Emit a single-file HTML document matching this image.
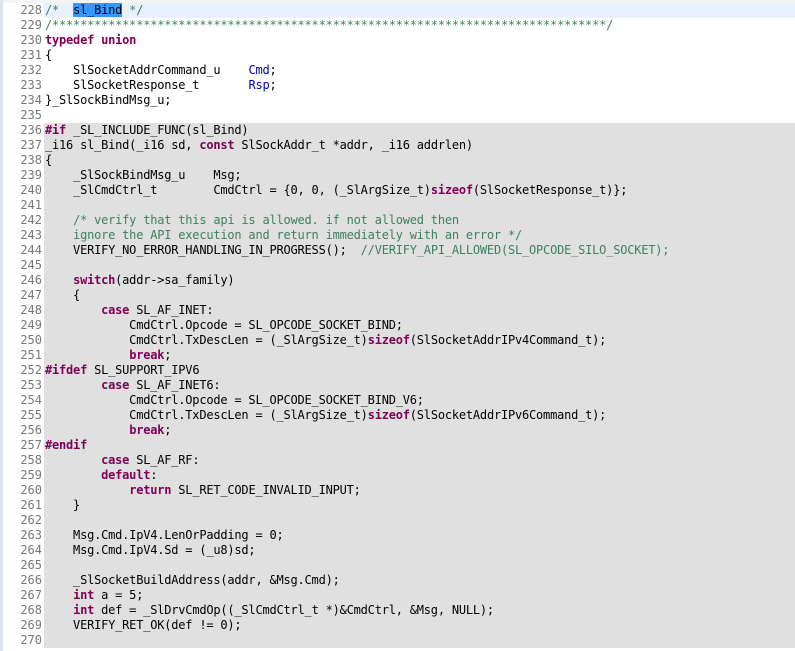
<!DOCTYPE html>
<html><head><meta charset="utf-8"><style>
body{margin:0;width:795px;height:651px;overflow:hidden;background:#fff;font-family:"DejaVu Sans Mono","Liberation Mono",monospace;font-size:12px;letter-spacing:-0.21px;position:relative}
#lb{position:absolute;left:0;top:0;width:3px;height:651px;background:#dfe3ea}
#top{position:absolute;left:0;top:0;width:795px;height:3px;background:#f4f4f4}
#gray{position:absolute;left:44px;top:123px;width:751px;height:525px;background:#e0e0e0}
#cur{position:absolute;left:44px;top:3px;width:751px;height:15px;background:#e8f2fe}
.l{position:absolute;left:0;height:15px;line-height:15px;white-space:pre;width:795px}
.n{display:inline-block;width:42px;text-align:right;color:#787878;margin-right:3px;letter-spacing:0}
.k{color:#7f0055;font-weight:bold}
.c{color:#3f7f5f}
.f{color:#0000c0}
.s{background:#3399ff}
</style></head><body>
<div id="top"></div><div id="lb"></div><div id="cur"></div><div id="gray"></div>
<div class="l" style="top:3px"><span class="n">228</span><span class="c">/*  <span class="s" style="color:#000">sl_Bind</span> */</span></div>
<div class="l" style="top:18px"><span class="n">229</span><span class="c">/*******************************************************************************/</span></div>
<div class="l" style="top:33px"><span class="n">230</span><span class="k">typedef</span> <span class="k">union</span></div>
<div class="l" style="top:48px"><span class="n">231</span>{</div>
<div class="l" style="top:63px"><span class="n">232</span>    SlSocketAddrCommand_u    <span class="f">Cmd</span>;</div>
<div class="l" style="top:78px"><span class="n">233</span>    SlSocketResponse_t       <span class="f">Rsp</span>;</div>
<div class="l" style="top:93px"><span class="n">234</span>}_SlSockBindMsg_u;</div>
<div class="l" style="top:108px"><span class="n">235</span></div>
<div class="l" style="top:123px"><span class="n">236</span><span class="k">#if</span> _SL_INCLUDE_FUNC(sl_Bind)</div>
<div class="l" style="top:138px"><span class="n">237</span>_i16 sl_Bind(_i16 sd, <span class="k">const</span> SlSockAddr_t *addr, _i16 addrlen)</div>
<div class="l" style="top:153px"><span class="n">238</span>{</div>
<div class="l" style="top:168px"><span class="n">239</span>    _SlSockBindMsg_u    Msg;</div>
<div class="l" style="top:183px"><span class="n">240</span>    _SlCmdCtrl_t        CmdCtrl = {0, 0, (_SlArgSize_t)<span class="k">sizeof</span>(SlSocketResponse_t)};</div>
<div class="l" style="top:198px"><span class="n">241</span></div>
<div class="l" style="top:213px"><span class="n">242</span>    <span class="c">/* verify that this api is allowed. if not allowed then</span></div>
<div class="l" style="top:228px"><span class="n">243</span><span class="c">    ignore the API execution and return immediately with an error */</span></div>
<div class="l" style="top:243px"><span class="n">244</span>    VERIFY_NO_ERROR_HANDLING_IN_PROGRESS();  <span class="c">//VERIFY_API_ALLOWED(SL_OPCODE_SILO_SOCKET);</span></div>
<div class="l" style="top:258px"><span class="n">245</span></div>
<div class="l" style="top:273px"><span class="n">246</span>    <span class="k">switch</span>(addr-&gt;sa_family)</div>
<div class="l" style="top:288px"><span class="n">247</span>    {</div>
<div class="l" style="top:303px"><span class="n">248</span>        <span class="k">case</span> SL_AF_INET:</div>
<div class="l" style="top:318px"><span class="n">249</span>            CmdCtrl.Opcode = SL_OPCODE_SOCKET_BIND;</div>
<div class="l" style="top:333px"><span class="n">250</span>            CmdCtrl.TxDescLen = (_SlArgSize_t)<span class="k">sizeof</span>(SlSocketAddrIPv4Command_t);</div>
<div class="l" style="top:348px"><span class="n">251</span>            <span class="k">break</span>;</div>
<div class="l" style="top:363px"><span class="n">252</span><span class="k">#ifdef</span> SL_SUPPORT_IPV6</div>
<div class="l" style="top:378px"><span class="n">253</span>        <span class="k">case</span> SL_AF_INET6:</div>
<div class="l" style="top:393px"><span class="n">254</span>            CmdCtrl.Opcode = SL_OPCODE_SOCKET_BIND_V6;</div>
<div class="l" style="top:408px"><span class="n">255</span>            CmdCtrl.TxDescLen = (_SlArgSize_t)<span class="k">sizeof</span>(SlSocketAddrIPv6Command_t);</div>
<div class="l" style="top:423px"><span class="n">256</span>            <span class="k">break</span>;</div>
<div class="l" style="top:438px"><span class="n">257</span><span class="k">#endif</span></div>
<div class="l" style="top:453px"><span class="n">258</span>        <span class="k">case</span> SL_AF_RF:</div>
<div class="l" style="top:468px"><span class="n">259</span>        <span class="k">default</span>:</div>
<div class="l" style="top:483px"><span class="n">260</span>            <span class="k">return</span> SL_RET_CODE_INVALID_INPUT;</div>
<div class="l" style="top:498px"><span class="n">261</span>    }</div>
<div class="l" style="top:513px"><span class="n">262</span></div>
<div class="l" style="top:528px"><span class="n">263</span>    Msg.Cmd.IpV4.LenOrPadding = 0;</div>
<div class="l" style="top:543px"><span class="n">264</span>    Msg.Cmd.IpV4.Sd = (_u8)sd;</div>
<div class="l" style="top:558px"><span class="n">265</span></div>
<div class="l" style="top:573px"><span class="n">266</span>    _SlSocketBuildAddress(addr, &amp;Msg.Cmd);</div>
<div class="l" style="top:588px"><span class="n">267</span>    <span class="k">int</span> a = 5;</div>
<div class="l" style="top:603px"><span class="n">268</span>    <span class="k">int</span> def = _SlDrvCmdOp((_SlCmdCtrl_t *)&amp;CmdCtrl, &amp;Msg, NULL);</div>
<div class="l" style="top:618px"><span class="n">269</span>    VERIFY_RET_OK(def != 0);</div>
<div class="l" style="top:633px"><span class="n">270</span></div>
</body></html>
